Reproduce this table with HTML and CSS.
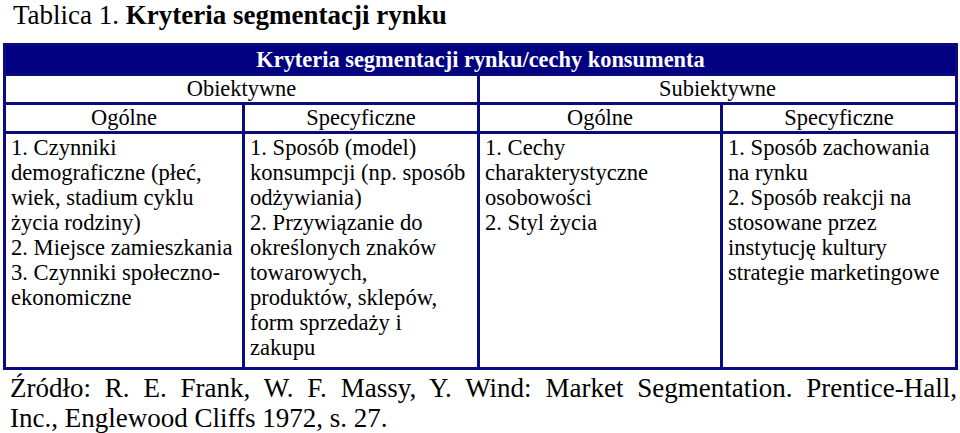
FILE: index.html
```html
<!DOCTYPE html>
<html lang="pl">
<head>
<meta charset="utf-8">
<title>Tablica 1. Kryteria segmentacji rynku</title>
<link rel="stylesheet" href="styles.css">
</head>
<body>
<h1 class="title">Tablica 1. <strong>Kryteria segmentacji rynku</strong></h1>
<table class="criteria">
  <colgroup>
    <col class="c1"><col class="c2"><col class="c3"><col class="c4">
  </colgroup>
  <thead>
    <tr class="row-main">
      <th colspan="4">Kryteria segmentacji rynku/cechy konsumenta</th>
    </tr>
    <tr class="row-group">
      <td colspan="2">Obiektywne</td>
      <td colspan="2">Subiektywne</td>
    </tr>
    <tr class="row-sub">
      <td>Ogólne</td>
      <td>Specyficzne</td>
      <td>Ogólne</td>
      <td>Specyficzne</td>
    </tr>
  </thead>
  <tbody>
    <tr class="row-body">
      <td>1. Czynniki<br>demograficzne (płeć,<br>wiek, stadium cyklu<br>życia rodziny)<br>2. Miejsce zamieszkania<br>3. Czynniki społeczno-<br>ekonomiczne</td>
      <td>1. Sposób (model)<br>konsumpcji (np. sposób<br>odżywiania)<br>2. Przywiązanie do<br>określonych znaków<br>towarowych,<br>produktów, sklepów,<br>form sprzedaży i<br>zakupu</td>
      <td>1. Cechy<br>charakterystyczne<br>osobowości<br>2. Styl życia</td>
      <td>1. Sposób zachowania<br>na rynku<br>2. Sposób reakcji na<br>stosowane przez<br>instytucję kultury<br>strategie marketingowe</td>
    </tr>
  </tbody>
</table>
<p class="source"><span class="source-line">Źródło: R. E. Frank, W. F. Massy, Y. Wind: Market Segmentation. Prentice-Hall,</span> <span>Inc., Englewood Cliffs 1972, s. 27.</span></p>
</body>
</html>
```

FILE: styles.css
```css
html, body {
  margin: 0;
  padding: 0;
  background: #ffffff;
  color: #000000;
}

body, h1, p, span, table, th, td, strong {
  font-family: "Liberation Serif", "Times New Roman", serif;
}

.title {
  margin: 0 0 13px 13px;
  font-size: 27px;
  line-height: 30px;
  font-weight: normal;
  white-space: nowrap;
}

.title strong {
  font-weight: bold;
}

.criteria {
  margin-left: 3px;
  width: 954px;
  table-layout: fixed;
  border-collapse: collapse;
  border: 3px solid #0b0b80;
  font-size: 22.5px;
}

.c1 { width: 239px; }
.c2 { width: 235px; }
.c3 { width: 243px; }
.c4 { width: 235px; }

.criteria th,
.criteria td {
  border: 3px solid #0b0b80;
  padding: 0;
  font-size: 22.4px;
}

.row-main th {
  background: #000080;
  color: #ffffff;
  font-weight: bold;
  height: 27px;
  line-height: 27px;
  text-align: center;
}

.row-group td,
.row-sub td {
  height: 26px;
  line-height: 26px;
  text-align: center;
}

.row-body td {
  height: 232px;
  vertical-align: top;
  text-align: left;
  line-height: 25px;
  padding: 1px 4px 0 5px;
  font-size: 22.6px;
  white-space: nowrap;
}

.source {
  margin: 3px 3px 0 10px;
  font-size: 27px;
  line-height: 30px;
}

.source-line {
  display: block;
  text-align: justify;
  text-align-last: justify;
}
```
